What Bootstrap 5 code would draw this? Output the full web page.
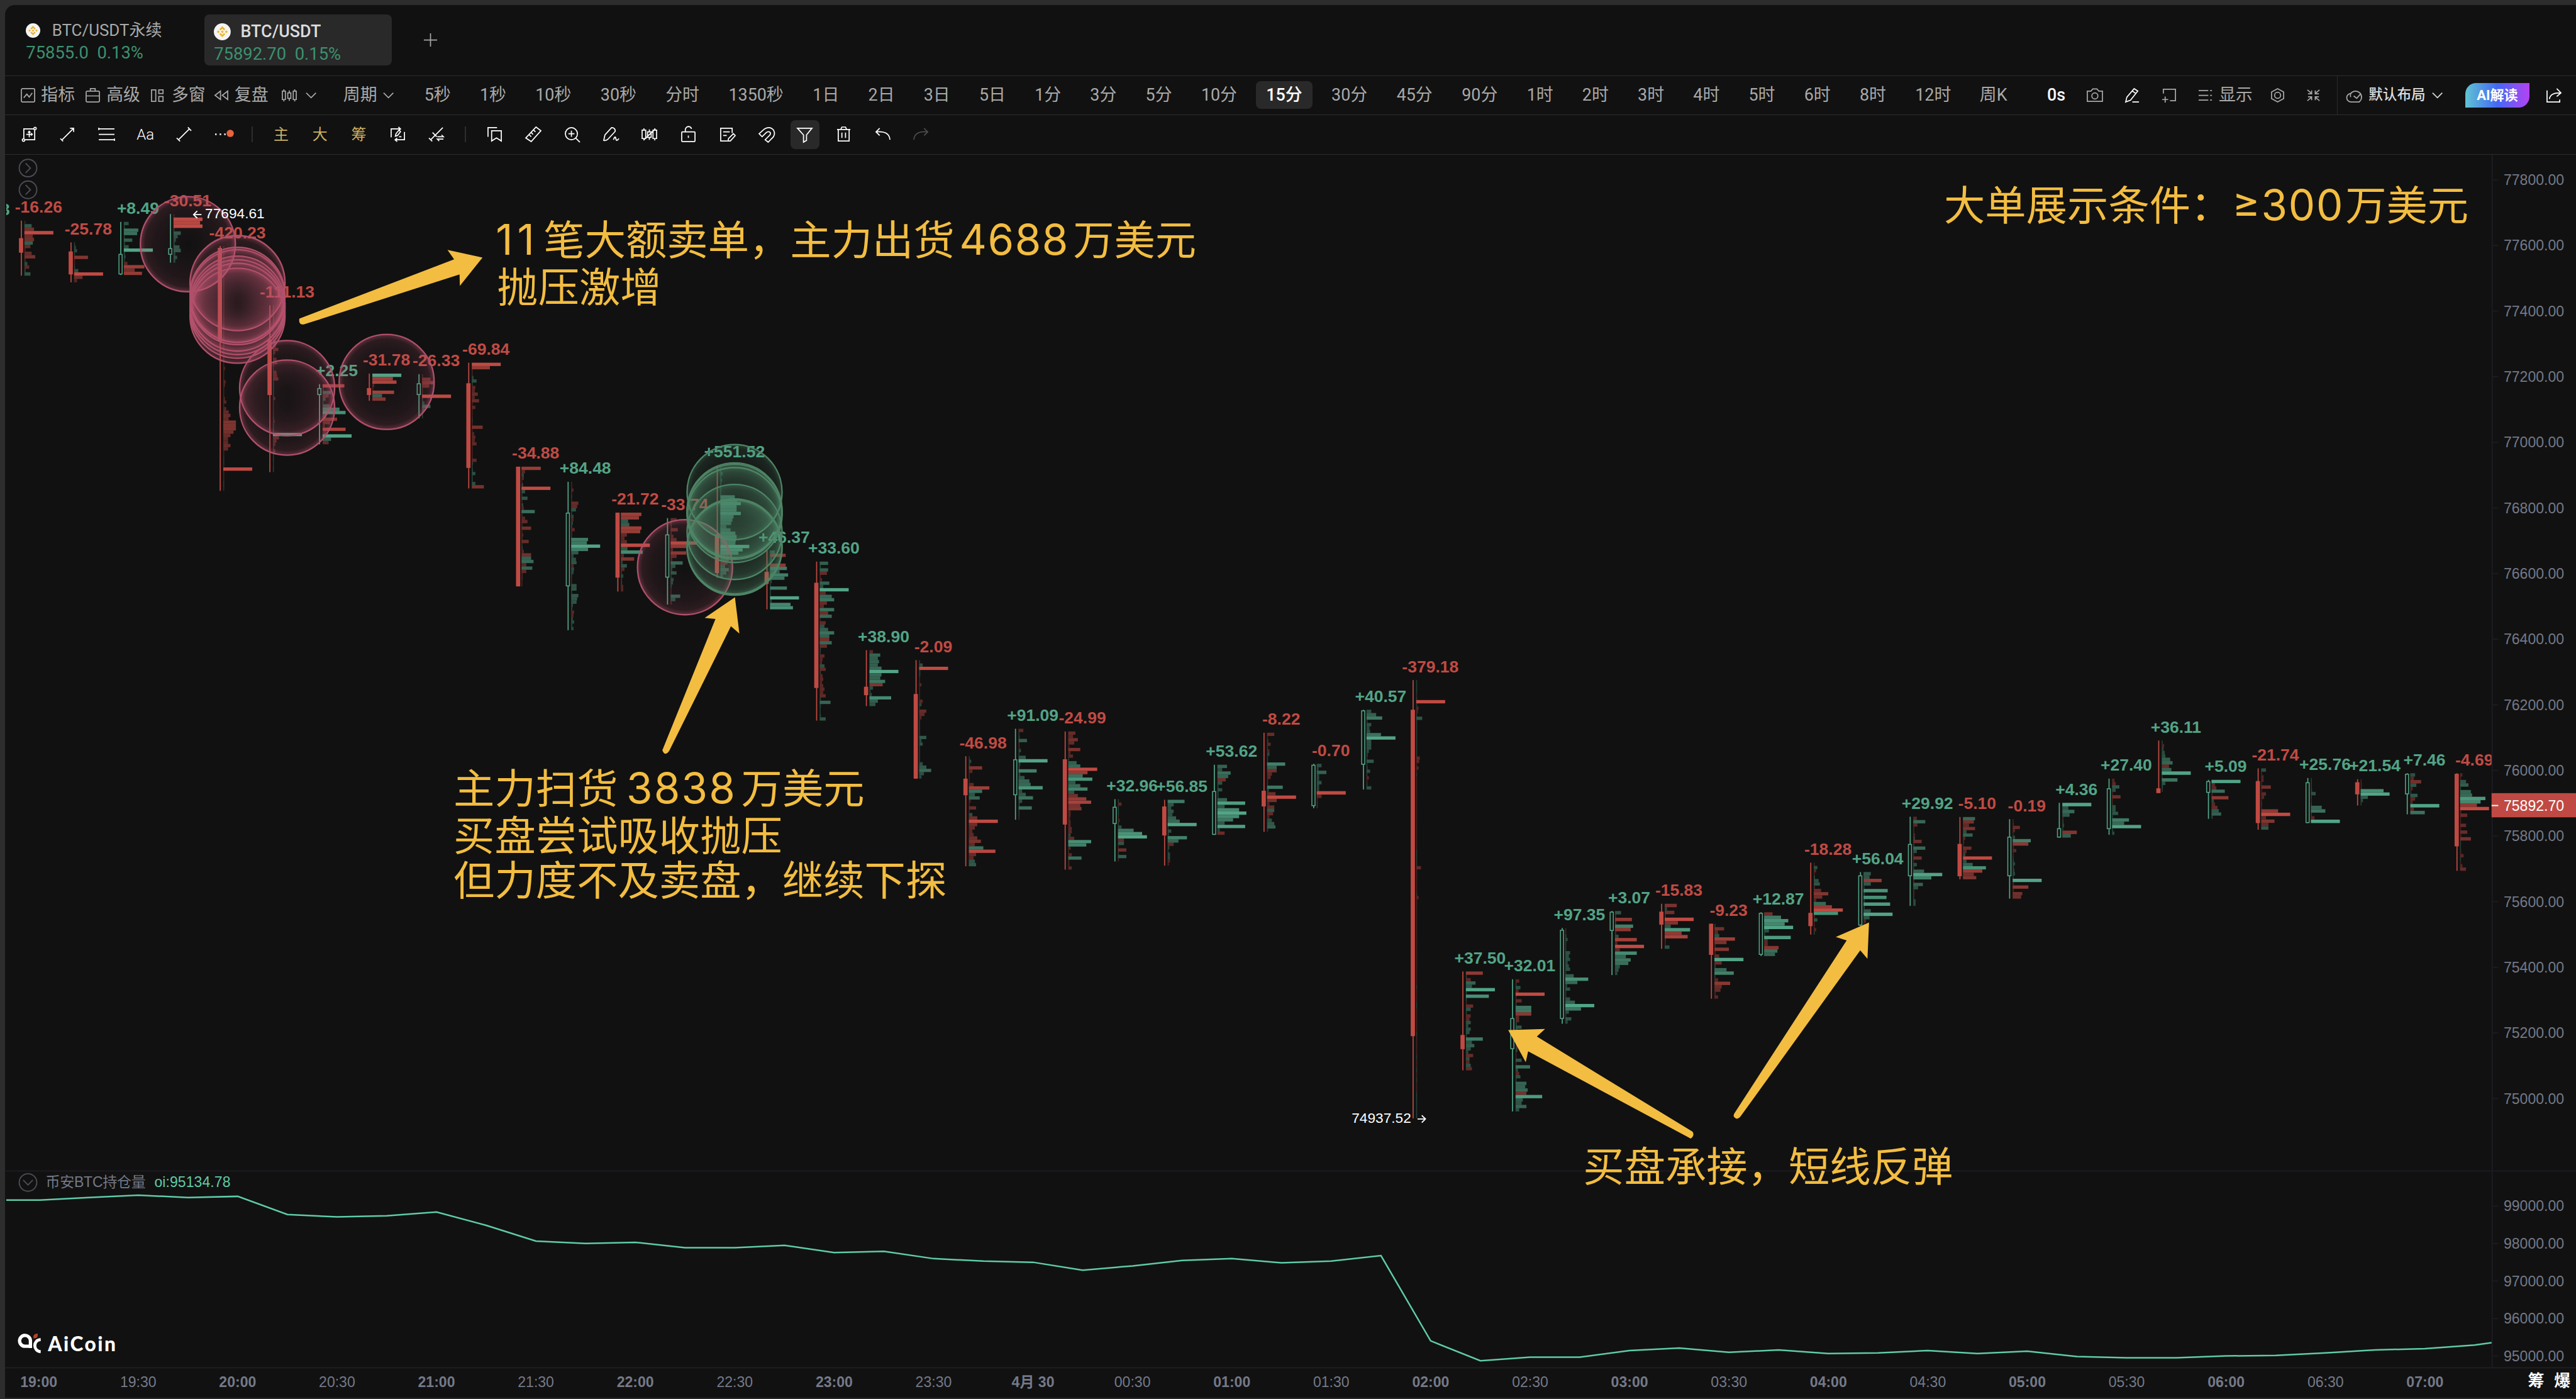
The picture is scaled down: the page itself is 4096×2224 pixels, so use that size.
<!DOCTYPE html>
<html lang="zh-CN" data-bs-theme="dark">
<head>
  <meta charset="UTF-8" />
  <meta name="viewport" content="width=device-width, initial-scale=1.0"/>
  <title>BTC/USDT 15分 - AiCoin</title>
  <link rel="stylesheet" href="https://cdn.jsdelivr.net/npm/bootstrap@5.3.0/dist/css/bootstrap.min.css"/>
  <style>
    /* 1rem = 10 design units, whole page scales with the window */
    html {
      font-size: calc(100vw / 426.2);
    }
    body {
      background: #2d2d2d;
      color: #a9a9a9;
      font-family: Roboto, "Noto Sans CJK SC", sans-serif;
      font-size: 2.8rem;
      line-height: 1;
      overflow: hidden;
    }
    .panel {
      background: #111;
      margin: 0.8rem 0 0 0.8rem;
      border-top-left-radius: 1.6rem;
      overflow: hidden;
      white-space: nowrap;
    }
    .bar {
      border-bottom: 0.2rem solid #2d2d2d;
    }
    .bar-tabs { height: 11.8rem; }
    .bar-period { height: 6.4rem; padding-left: 2.6rem; }
    .bar-draw { height: 6.6rem; padding-left: 0.8rem; }
    .pair {
      height: 8.4rem;
      border-radius: 0.8rem;
    }
    .pair-first {
      width: 31rem;
      padding: 0.9rem 0 0 1.6rem;
      margin: 1.6rem 0 0 1.9rem;
    }
    .pair-on {
      width: 31rem;
      background: #292929;
      padding: 1.1rem 0 0 1.6rem;
      margin: 1.6rem 0 0 0.1rem;
      color: #dcdcdc;
      font-weight: 500;
    }
    .pair-name { height: 3.6rem; font-size: 2.7rem; }
    .pair-on .pair-name { font-size: 2.8rem; }
    .pair-price {
      color: #3d9070;
      font-weight: 400;
      font-size: 2.85rem;
      line-height: 3.8rem;
    }
    .coin { width: 2.4rem; margin-right: 1.9rem; }
    .pair-on .coin { width: 2.8rem; margin-right: 1.6rem; }
    .tab-add { margin-left: 5.2rem; }
    .ico {
      width: 2.4rem;
      height: 2.4rem;
      fill: none;
      stroke: currentColor;
      stroke-width: 1.8;
      flex: none;
      overflow: visible;
    }
    .menu-item { gap: 1rem; flex: none; }
    .period {
      flex: none;
      height: 4.6rem;
      margin-right: 1.38rem;
      border-radius: 0.8rem;
    }
    .period-on {
      background: #292929;
      color: #fff;
      font-weight: 500;
    }
    .layout-box {
      border-left: 0.2rem solid #2d2d2d;
      padding-left: 1.4rem;
      font-size: 2.35rem;
      color: #dcdcdc;
      font-weight: 500;
      flex: none;
    }
    .cloud { width: 3.2rem; height: 2.6rem; color: #a9a9a9; }
    .ai-btn {
      width: 10.6rem;
      height: 4rem;
      margin: 0 2.8rem 0 3.2rem;
      border-radius: 1.8rem 0 1.8rem 0;
      background: linear-gradient(90deg, #5fc4d2, #4468f5 50%, #b443f2);
      color: #fff;
      font-size: 2.3rem;
      font-weight: 700;
      flex: none;
    }
    .slot {
      width: 6.42rem;
      height: 4.8rem;
      color: #fff;
      flex: none;
    }
    .slot-on {
      background: #292929;
      border-radius: 0.8rem;
      width: 4.8rem;
      margin: 0 0.81rem;
    }
    .slot-aa { font-size: 2.5rem; font-weight: 300; }
    .gold { color: #cdb163; font-size: 2.5rem; }
    .rule { width: 0.2rem; height: 2.6rem; margin: 0 1.5rem; background: #2d2d2d; flex: none; }
    .chart { width: 100%; }
    .axis-txt { font: 24px "Liberation Sans", sans-serif; fill: #747988; }
    .delta-txt { font: bold 27.6px "Liberation Sans", sans-serif; }
    .note-txt { font: 68px "Noto Sans CJK SC", sans-serif; fill: #f3bd41; }
    .note-num { font: 70px Inter, sans-serif; }
  </style>
</head>
<body>
  <div class="panel">
    <!-- Tabs -->
    <div class="bar bar-tabs d-flex">
      <div class="pair pair-first">
        <div class="pair-name d-flex align-items-center">
          <svg class="coin" viewBox="0 0 28 28"><use href="#coin"/></svg>BTC/USDT永续
        </div>
        <div class="pair-price">75855.0 &nbsp;0.13%</div>
      </div>
      <div class="pair pair-on">
        <div class="pair-name d-flex align-items-center">
          <svg class="coin" viewBox="0 0 28 28"><use href="#coin"/></svg>BTC/USDT
        </div>
        <div class="pair-price">75892.70 &nbsp;0.15%</div>
      </div>
      <div class="tab-add d-flex align-items-center">
        <svg class="ico" viewBox="0 0 24 24"><path d="M12 1v22M1 12h22"/></svg>
      </div>
    </div>

    <!-- Periods -->
    <div class="bar bar-period d-flex align-items-center">
      <div class="d-flex" id="menus"></div>
      <div class="d-flex" id="periods"></div>
      <div class="d-flex align-items-center" id="actions"></div>
      <div class="layout-box d-flex align-items-center h-100">
        <svg class="ico cloud" viewBox="0 0 32 26"><path d="M8 24a7 7 0 0 1-1-14 10 10 0 1 1 14 14zM12 14l5 4 6-7M7 10q-1 3 0 6"/></svg>
        <span class="ms-2 me-3">默认布局</span>
        <svg class="ico" viewBox="0 0 24 24"><path d="M2 8l8 8 8-8"/></svg>
      </div>
      <div class="ai-btn d-flex align-items-center justify-content-center">AI解读</div>
      <svg class="ico text-white" viewBox="0 0 24 24"><path d="M1 4v19h21v-4M5 18c1-7 6-10 18-10M17 1l7 7-7 6"/></svg>
    </div>

    <!-- Drawing tools -->
    <div class="bar bar-draw d-flex align-items-center" id="draw"></div>

    <svg class="chart d-block" id="chart" viewBox="8 256 4254 2058">
      <defs>
        <symbol id="coin" viewBox="0 0 28 28">
          <circle cx="14" cy="14" r="14" fill="#f4f4f4"/>
          <path fill="#f0b429" d="M14 5l5 5-2 2-3-3-3 3-2-2zM14 23l5-5-2-2-3 3-3-3-2 2zM14 11.700l2.300 2.300-2.300 2.300-2.300-2.300zM7.300 11.700l2.300 2.300-2.300 2.300L5 14zM20.700 11.700L23 14l-2.300 2.300-2.300-2.300z"/>
        </symbol>
        <radialGradient id="sellFill">
          <stop offset="0" stop-color="#b8526d" stop-opacity="0"/>
          <stop offset=".7" stop-color="#b8526d" stop-opacity=".09"/>
          <stop offset=".9" stop-color="#b8526d" stop-opacity=".16"/>
          <stop offset="1" stop-color="#b8526d" stop-opacity=".45"/>
        </radialGradient>
        <radialGradient id="buyFill">
          <stop offset="0" stop-color="#4f8a69" stop-opacity=".03"/>
          <stop offset=".7" stop-color="#4f8a69" stop-opacity=".1"/>
          <stop offset=".9" stop-color="#4f8a69" stop-opacity=".17"/>
          <stop offset="1" stop-color="#4f8a69" stop-opacity=".36"/>
        </radialGradient>
        <clipPath id="plot"><rect x="10" y="256" width="4112" height="1680"/></clipPath>
      </defs>
      <g id="frame"></g>
      <g id="candles" clip-path="url(#plot)"></g>
      <g id="bubbles"></g>
      <g id="oi"></g>
      <g id="extremes" font-family="Liberation Sans, sans-serif" font-size="23.600" fill="#fff">
        <text x="339" y="361.500">77694.61</text>
        <path d="M333 355h-13m6-6l-6 6 6 6" fill="none" stroke="#fff" stroke-width="2"/>
        <text x="2236" y="1857.500">74937.52</text>
        <path d="M2345 1851h13m-6-6l6 6-6 6" fill="none" stroke="#fff" stroke-width="2"/>
      </g>
      <g id="arrows" fill="#f3bd41">
        <path d="M495 527L751 429 740 413.500 798 426 760.500 473 760 454 503 536.500Q493 538 495 527z"/>
        <path d="M1095.500 1241L1183.400 1024 1165.600 1022 1215.600 988 1223 1048 1209 1036 1107 1242Q1100 1252 1095.500 1241z"/>
        <path d="M2495 1704L2556 1702 2542.400 1714.700 2800 1872Q2804 1878 2797 1883.500L2528 1739 2524 1757z"/>
        <path d="M3092 1526L3089.400 1586 3077.500 1572 2880 1846Q2874 1854 2869 1848Q2867 1846 2869 1842L3055 1555.500 3037 1550z"/>
      </g>
      <g class="note-txt">
        <text y="421"><tspan class="note-num" x="820" textLength="64">11</tspan><tspan x="899">笔大额卖单，主力出货</tspan><tspan class="note-num" x="1587" textLength="180">4688</tspan><tspan x="1775">万美元</tspan></text>
        <text x="822" y="500">抛压激增</text>
        <text y="1329"><tspan x="750">主力扫货</tspan><tspan class="note-num" x="1036" textLength="180">3838</tspan><tspan x="1226">万美元</tspan></text>
        <text x="750" y="1407">买盘尝试吸收抛压</text>
        <text x="750" y="1481">但力度不及卖盘，继续下探</text>
        <text x="2619" y="1954">买盘承接，短线反弹</text>
        <text y="364"><tspan x="3216">大单展示条件：</tspan><tspan class="note-num" x="3693" textLength="183">≥300</tspan><tspan x="3880">万美元</tspan></text>
      </g>
      <!-- Logo -->
      <g>
        <path d="M50 2230V2217a9 9 0 1 0-9 10h9" fill="none" stroke="#fff" stroke-width="5.500"/>
        <path d="M67 2216c-13 0-13 19 0 20" fill="none" stroke="#fff" stroke-width="5"/>
        <path d="M55 2214v-4q1-4 7-4v4q-1 4-7 4z" fill="#b8402a"/>
        <text x="79" y="2235" textLength="112" font-family="Lato" font-weight="900" font-size="33" fill="#fff">AiCoin</text>
      </g>
    </svg>
  </div>

  <script>
    // ---------- toolbars ----------
    const icons = {
      indicator: '<rect x="1" y="1" width="22" height="22" rx="2"/><path d="M5 16l5-6 4 5 5-7"/>',
      bag: '<rect x="1" y="5" width="22" height="18" rx="2"/><path d="M8 5V1h8v4M1 13h22"/>',
      windows: '<rect x="1" y="3" width="7" height="19"/><rect x="13" y="3" width="7" height="6"/><rect x="13" y="14" width="7" height="8"/>',
      rewind: '<path d="M11 5L2 12l9 7zM23 5l-9 7 9 7z"/>',
      kline: '<path d="M1 5h5v14H1zM10 8h5v9h-5zM19 5h5v14h-5zM3.500 2v3M3.500 19v3M12.500 4v4M12.500 17v4M21.500 2v3M21.500 19v3"/>',
      down: '<path d="M1 8l8 8 8-8"/>',
      camera: '<path d="M1 5h6l3-3.500h7L20 5h6v17H1z"/><circle cx="13.500" cy="13" r="5"/>',
      pen: '<path d="M1 23l2-8L15 1l6 4L9 20zM12 5l6 4M12 23h11" stroke="#fff"/>',
      addpane: '<path d="M3 9V2h20v19h-9M6 14v10M1 19h10"/>',
      list: '<path d="M1 4h16M1 12h16M1 20h16M20 4h3M20 12h3M20 20h3"/>',
      hex: '<path d="M12 1l10 5.500v11L12 23 2 17.500v-11z"/><circle cx="12" cy="12" r="5"/>',
      shrink: '<path d="M2 3l7 6M22 3l-7 6M2 21l7-6M22 21l-7-6M9 4v5.500H3M15 4v5.500h6M9 20v-5.500H3M15 20v-5.500h6"/>',
      plusbox: '<path d="M21 5v16H5M3 19V3h16M12 7v10M7 12h10M10 9l2-2 2 2M15 10l2 2-2 2"/><circle cx="21.500" cy="2.500" r="2"/><circle cx="2.500" cy="21.500" r="2"/>',
      line: '<path d="M3 21L22 2M16 2h6v6M0 19l4.500 4.500"/>',
      rows: '<path d="M-1 3h26M-1 12h26M-1 21h26M-1 1v4M25 19v4"/>',
      seg: '<path d="M3 21L21 3M0 18l5.500 5.500M18.500.5L24 6"/>',
      dots: '<path d="M-1 12h2.500M6.500 12h2.500M14 12h2.500" stroke-width="2.500"/><circle cx="24" cy="10.500" r="6" fill="#e8643c" stroke="none"/>',
      swap: '<path d="M1 17V3h15M13 0l3.500 3-3.500 3M23 8v13H8M11 18l-3.500 3 3.500 3M8 15l1-4 5-6 2.500 2.500-5 6.500zM14 16h4"/>',
      linecut: '<path d="M3 21L23 1M0 18l5.500 5.500M6 9l7 7M14 16h10l-3-3M24 20H14l3 3"/>',
      bookmark: '<path d="M1 16V1h15M7 6h16v17l-8-5-8 5z"/>',
      ruler: '<path d="M17 0l8 6L9 24l-9-6zM13 5l3 3M9 9l3 3M6 13l3 3"/>',
      zoomin: '<circle cx="11" cy="11" r="10"/><path d="M18 18l7 7M11 6v10M6 11h10"/>',
      brush: '<path d="M0 22l2-9L13 1q6 0 6 6L7 20q-3 3-7 2zM16 21q3-8 4-2t5 0"/>',
      nokline: '<path d="M0 5h6v14H0zM9 8h6v9H9zM18 5h6v14h-6zM3 2v3M3 19v3M12 4v4M12 17v4M21 2v3M21 19v3M3 21L22 3"/>',
      lock: '<rect x="1" y="8" width="22" height="16" rx="1"/><path d="M7 8V4q1-5 6-5 4 1 4 4M12 14v4"/>',
      edit: '<path d="M12 23H1V2h19v8M5 8h11M5 14h6M13 23l1-4 8-8 3 3-8 9z"/>',
      magnet: '<path d="M0 11L9 3q9-5 15 2 4 8-3 14l-6 6-5-4 8-8q2-4-1-5-3-1-5 1l-7 7z"/>',
      funnel: '<path d="M0 2h24l-9 11v9l-5 3V13z"/>',
      trash: '<path d="M1 4h22M3 4v19h18V4M7 4l2-4h6l2 4M9 9v9M15 9v9"/>',
      undo: '<path d="M7 2L1 8l6 6M1 8q22-2 23 13"/>',
      redo: '<path d="M17 2l6 6-6 6M23 8Q1 6 0 21"/>'
    };
    const ico = (name) => `<svg class="ico" viewBox="0 0 24 24">${icons[name]}</svg>`;
    const item = ([w, icon, text]) =>
      `<div class="menu-item d-flex align-items-center" style="width:${w / 10}rem">${icon ? ico(icon) : ""}${text ? `<span>${text}</span>` : ""}</div>`;

    document.getElementById("menus").innerHTML =
      [[108, "indicator", "指标"], [108, "bag", "高级"], [104, "windows", "多窗"], [112, "rewind", "复盘"],
       [40, "kline"], [62, "down"]].map(item).join("") +
      `<div class="menu-item d-flex align-items-center" style="width:11.7rem">周期${ico("down")}</div>`;

    const periods = ["5秒", "1秒", "10秒", "30秒", "分时", "1350秒", "1日", "2日", "3日", "5日", "1分", "3分", "5分", "10分", "15分",
      "30分", "45分", "90分", "1时", "2时", "3时", "4时", "5时", "6时", "8时", "12时", "周K"];
    document.getElementById("periods").innerHTML = periods.map((p) => {
      let w = 34;
      for (const c of p) w += c > "\u2e80" ? 28 : 16;
      return `<div class="period d-flex align-items-center justify-content-center${p === "15分" ? " period-on" : ""}" style="width:${w / 10}rem">${p}</div>`;
    }).join("");

    document.getElementById("actions").innerHTML =
      '<div class="text-light fw-medium" style="width:6.6rem;margin-left:3.6rem">0s</div>' +
      [[63, "camera"], [60, "pen"], [61, "addpane"], [119, "list", "显示"], [60, "hex"], [51, "shrink"]].map(item).join("");

    const tools = ["plusbox", "line", "rows", "#Aa", "seg", "dots", "|", "#主", "#大", "#筹", "swap", "linecut", "|",
      "bookmark", "ruler", "zoomin", "brush", "nokline", "lock", "edit", "magnet", "funnel", "trash", "undo", "redo"];
    document.getElementById("draw").innerHTML = tools.map((t) => {
      if (t === "|") return '<div class="rule"></div>';
      const cls = t === "funnel" ? " slot-on" : t === "redo" ? " opacity-25" : t === "#Aa" ? " slot-aa" : "";
      const gold = t[0] === "#" && t !== "#Aa" ? " gold" : "";
      return `<div class="slot d-flex align-items-center justify-content-center${cls}${gold}">${t[0] === "#" ? t.slice(1) : ico(t)}</div>`;
    }).join("");

    // ---------- chart ----------
    const GREEN = "#52a486", RED = "#c04a43";
    const STEP = 82.24, ROW_MAX = 48;

    // label, candle colour, high, low, body top, body bottom, volume rows from the top
    const candles = [
      ["-16.26", "r", 365, 456, 394, 418, "r1 g12 r16 r48 r14 r16 g14 r10 r2 r12 r18 r2 g5 r8 g2 g10"],
      ["-25.78", "r", 401, 467, 416, 454, "g1 g3 g5 g1 r23 r1x2 g1 g7 r48 r14 r5"],
      ["+8.49", "g", 367, 455, 420, 454, "g8 g1 g24 g22 g1 g14 g2 g8 g48 g2 g3 g1 r6 r34 r18 r30"],
      ["-30.51", "g", 354, 434.5, 410.5, 421.5, "r1 r48 r44 r48 g1 g12 g7 g4 g2 g10 g12 g3 g6 g3"],
      ["-420.23", "r", 407, 812, 410, 564, "r1x36 r3 r1x3 r4 r3 r1x3 r3 r5 r1 r5 r9 r12 r9 r21x3 r17 r12 r8x2 r12 r8 r1x2 g1x2 r1 r48 r1x3 g1x2 r1"],
      ["-111.13", "r", 505, 781, 562, 653.5, "g1x5 r1x6 g5 r5 r9 r4 r1 r6 r7 r1x2 r6 r7 r9 g1x5 r4 r1x5 g1 r3 g1x3 g48 r10 r6 r4 r2 r4 g1x3 r1 g1x2"],
      ["+2.25", "g", 635.5, 735, 642, 653.5, "r36 r2 g14 r10 g5 g1 g12 g28 g38 g6 r24 r12 r4 r38 r6 g48 g14 r10"],
      ["-31.78", "r", 618, 663, 642, 653.5, "g48 r34 r40 r3 r1 r36 g16 r22"],
      ["-26.33", "g", 619, 692, 634, 653.5, "r1 r14 r19 r12 r1x2 r48 g1 g4 g14 g4 g1x2"],
      ["-69.84", "r", 600, 808, 634, 774, "r48 r30 r1x2 g3 g8 g1 r6 r5 r10 r5 r12 r1 r6 r1x3 g1 r1 r18 r1 r4 r6 r5 r8 r1x4 r8 g2 g1 g2 g6 g1x2 g6 r20"],
      ["-34.88", "r", 772, 970, 772, 970, "r32 r6 g4 r4 r1 g3 r48 g6 g1 g10 r1 g3 r4 g22 g1 r6 r10 g1 r16 r1 r3 g1 r12 g1 g2 r4 r16 g16 g20 r8 g18 r8 r2x2 r1x2"],
      ["+84.48", "g", 797, 1042.5, 848, 970, "r1x2 r4 r1 g1 r1 r12 r10 g8 g1 g4 r4 g3 g2 r6 r2 g1 g28 g26 g48 g28 g12 g4 g8 g9 r4 g5 g4 g1 r1x2 g9x2 g1 g12 g10 g9 g3 g2 r5 r4 g3 g5 g2 g4"],
      ["-21.72", "r", 848, 978.5, 848, 955.5, "r34 r30 g12 g14 r34 r32 r10 r6 r10 r48 g11 g36 r5 r22 g3 g10 r6 r2 g4 r2 g2 r4x2"],
      ["-33.74", "g", 857, 1000, 884, 955.5, "r10 r2x2 r12 r2 r5 r10 r44 r26 r4 r26 r10 r3 g20 g8 g3 g10 g1 g5 g4 g2 r1x2 g16 g8 r2"],
      ["+551.52", "r", 770, 956, 884, 948, "g1x2 g4 g1 g3 g1x4 g24 g28 g34 g27x2 g34 g22 g20 g18 g10 g17 g25 g27 g26 g25 g48 g37 g30 r14 g14 r12 g8 g14 g10 g4"],
      ["+46.37", "r", 910.5, 1008, 946, 966, "g8 r26 g3 g1 r26 g28 g16 g30 g24 g3 g1 g28 g1x2 g48 g3 g34 g38"],
      ["+33.60", "r", 929, 1192, 964, 1138, "g14 g2 g14 r12 r2 r4 g16 g6 g48 r10 g20 g24 r12 r7 g24 r14 g20 r1 r10 g8 g14 g24 g16 r16 g20 r12 g2 g1 r8 r5 r4 g8 r10 g2 r5 r6 r4 r6 r8 r6 r10 g2 g18 g2 g1x2 g2 g10"],
      ["+38.90", "r", 1075.5, 1168, 1136, 1150, "r6 g18 g14 g16 g14 g20 g48 g20 g18 g26 r22 g6 g2 g4 g36 g14 g10"],
      ["-2.09", "r", 1092, 1288, 1148, 1288, "g1 g6 r48 g2x2 r1x2 r4 r1x4 r6 g4 r1 r12 r9 r4 g1x5 g12 g4 g6 g1x5 g6 g12 g20 g8 g4"],
      ["-46.98", "r", 1251, 1433, 1288, 1315.5, "g1 g4 g2 r22 r6 r1x3 r8 r34 g22 g10 g18 r3 r1 r12 r1 g6 r14 r48 r14 r10 r6 r8 r14 r20 r10 g24 r44 r12 r8 g10 g12"],
      ["+91.09", "g", 1205.5, 1356, 1256, 1315.5, "r8 g1 g2 g14 r2x2 g4 g1 g12 g48 g3 g2 g30 g3 g10 g18 g20 g40 g6 g12 g24 g6 g2 g22 g1x2 r1"],
      ["-24.99", "r", 1210, 1438.5, 1256, 1364, "r12 r8 r16 r10 r2 r20 r4 r8 g1 g14 g20 r48 r32 g24 g40 g12 g20 g32 g10 r16 r30 r38 r20 r22 r4x2 r3 r4x2 r6x2 g4 r10 g38 g30 r4 r1 r6 g22 r2x2 r6"],
      ["+32.96", "g", 1322, 1425, 1334.5, 1363, "g1 r6 g1x3 r1 r3 g1 g6 g26 g40 g48 r10 g10 r1 r14 g1 g14 r1"],
      ["+56.85", "r", 1323, 1432, 1334, 1382, "g28 g10 g6 g10 g8 g14 g20 g48 g1 g6 g2 g32 g18 r10 g3 g1 g4x2 r4 r2"],
      ["+53.62", "g", 1265, 1381, 1308.5, 1381, "g16 g8 g22 g18 r14 g8 g2 g8 g2x2 g16 g46 g12 g36 g48 g36 g26 g12 g46 g4 r12"],
      ["-8.22", "r", 1212, 1376, 1308, 1334, "r12 r1 g2 r6 g1 r4 g4 g1x2 g30 g16 r16 r8 r6 r2 g1 g26 g3 r14 r48 r16 r4 r12 g12 r10 r4 g8 g12 g14 g1"],
      ["-0.70", "g", 1263.5, 1337, 1265, 1333.5, "g8 g3 g16 g4x2 g8 g4x2 r48 r8 r1 g1x2"],
      ["+40.57", "g", 1174, 1306, 1175, 1265, "g8 g16 g26 g1 g8 g5 g6 g24 g48 g8x3 g4 g2 g1 g12 g1 g2 g6 g1 r4 r1 g1 g8"],
      ["-379.18", "r", 1125, 1850, 1174, 1714, "g1x4 r1 g1 r48 g1 r4 r3 g1 g10 g1x11 r6 r5 r1 r4 r1 g1 r1x22 g1x5 r8 r1x7 g1 r4 r1x26 g1 r1x4 g1x2 r1x7 g1 r1x6 g1 r1x3 g1 r1x2 g1 r1x3 g1x8"],
      ["+37.50", "r", 1607, 1770.5, 1712, 1735.5, "r28 g1 r8 g16 g10 g48 g1 g38 g1 r1 r12 g8 g1 r8 r6 g8 g4 g8 g6 g1 g28 g10 g14 g8 g4 r12 g6 r6 g8 r10"],
      ["+32.01", "g", 1620, 1838.5, 1684, 1735.5, "r6 g1 g8 r5 r48 r1 r10 g1 g26x2 r26 r6x2 g2 g10 g3 r2 r4 r6 r8 r4 g3 r1x2 g10 r1 g24 g4 r6 g8 g1 g18 g16 g20 r18 g44 g12 g10 g18 g6"],
      ["+97.35", "g", 1535, 1693.5, 1538, 1685.5, "r1x2 g2 g4 g1x3 g8 g6 g8 g4 g6 g8 g1 g14 g38 g20 g3 g8 g1x2 g8 g16 g48 g26 g6 g1 g10 g4"],
      ["+3.07", "g", 1507, 1613, 1508, 1540, "g10 r2 r28 g2 g30 r26 r2 g6 r36 r4 r48 r8 g36 g18 g26 g22 g8 g6 g4"],
      ["-15.83", "r", 1495, 1569.5, 1508, 1529.5, "r20 g4 r16 r2 r48 r22 g10 g42 r28 r38 r2 r1 g8"],
      ["-9.23", "r", 1528, 1652, 1528, 1579.5, "g1 r16 r6 g8 r34 r20 r2 r24 r2 r8 g48 r12 g2 g20 g32 g1 r6 r26 r12 r10 r2 r6"],
      ["+12.87", "g", 1509, 1581.5, 1510, 1579.5, "r14 g28 g40 g34 g48 g8 g1 g44 r6x2 r24 g22 g18"],
      ["-18.28", "r", 1427, 1546, 1510, 1532, "r1 g6 r4 r1 g2 g8 g10 r2 r12 r24 r14 r4 g20 r30 r48 g40 r2 g6 r1x2 r4 g1"],
      ["+56.04", "g", 1442.5, 1532, 1448, 1531, "g12 g10 r30 g12 g1 g40 g2 g38 g2 g44 g2 g12 g48 g10 r4 r1"],
      ["+29.92", "g", 1351, 1498.5, 1396, 1449.5, "r6 g20 r7 r1x2 r3 g3 r14 g1 g20 g6 r1 r14 r1 g6 g1 g18 g48 g30 r2 g16 g8 r2x2 g1 g4x2"],
      ["-5.10", "r", 1351.5, 1454.5, 1396, 1449.5, "g20 r18 r10 r20 g6 g16 r4 r2 r1 r14 r6 g4 r48 g6 g16 g38 r32 r18 r22"],
      ["-0.19", "g", 1355, 1486.5, 1384, 1449.5, "r1 r2 r12 r4 r1 g4 g30 r26 r2 r6 r1 g1 g2 g4 g2 g3 g4 g1 g48 r2 r26 r2 r16 r14"],
      ["+4.36", "g", 1328, 1385.5, 1370, 1385.5, "g48 g10 g20 g12 r2 g2 g3 g1 r24 g14"],
      ["+27.40", "g", 1288, 1381, 1304, 1371.5, "r4 r6 g12 g6 r1 r14 r1x2 g6x2 g10 g1 g28 g20 g48 g1 g4"],
      ["+36.11", "r", 1225, 1310, 1304, 1312, "g1 r4 g3 g5 g6 g14 g18 r12 g16 g48 r1 g26 g6 g2 g1"],
      ["+5.09", "g", 1290, 1354.5, 1292, 1311.5, "g48 r6 r8 g22 r2 r28 g4 r6 r10 g12 g16 g2"],
      ["-21.74", "r", 1271, 1372.5, 1292, 1361.5, "g8 r1 r4x2 r1 r16 r1 r8 r5 r1 g1 r1 r28 r48 r8 r22 r12 g12"],
      ["+25.76", "g", 1287, 1361.5, 1294, 1361.5, "g1x3 g2 g8 g1 r1 g1 g18 g24 g1 r6 g48"],
      ["+21.54", "r", 1289, 1332.5, 1294, 1314, "r1 r2x2 g38 g48 g12 g4 g1"],
      ["+7.46", "g", 1279, 1347, 1280, 1314, "g8 r6 r18 g10 r4 g1 g12 r8 r4 g48 r6 g24"],
      ["-4.69", "r", 1279, 1440.5, 1280, 1400, "r4 r1 g10 g14 g1 g18 g20 g42 g34 r28 r48 r2 r12 r1x2 r10 r1 r12 r2 r18 g1x3 r2 r6 g1 r1 r4 r10"]
    ];

    const rect = (x, y, w, h, attrs) => `<rect x="${x.toFixed(1)}" y="${y.toFixed(1)}" width="${w}" height="${h.toFixed(1)}" ${attrs}/>`;
    const text = (x, y, s, attrs) => `<text x="${x}" y="${y}" ${attrs}>${s}</text>`;

    let out = text(16, 356, "3", `class="delta-txt" text-anchor="end" fill="${GREEN}"`);
    candles.forEach(([label, dir, high, low, top, bottom, profile], i) => {
      const x = 35 + STEP * i;
      const rows = [];
      profile.split(" ").forEach((t) => {
        const [w, n] = t.slice(1).split("x");
        for (let k = 0; k < (n || 1); k++) rows.push([t[0], +w]);
      });
      const h = (low - high) / rows.length;
      rows.forEach(([c, w], k) => {
        const alpha = 0.32 + 0.68 * Math.min(1, w / ROW_MAX);
        out += rect(x + 5, high + k * h, Math.max(w, 1.6), h, `fill="${c === "g" ? GREEN : RED}" opacity="${alpha.toFixed(2)}"`);
      });
      const color = dir === "g" ? GREEN : RED;
      out += rect(x - 0.9, high, 1.8, low - high, `fill="${color}"`);
      out += dir === "g"
        ? rect(x - 3, top + 0.8, 5.2, bottom - top - 1.6, `fill="#111" stroke="${color}" stroke-width="1.6"`)
        : rect(x - 4, top, 7, bottom - top, `fill="${color}"`);
      out += text((x + 28.5).toFixed(1), high - 13, label, `class="delta-txt" text-anchor="middle" fill="${label[0] === "+" ? GREEN : RED}"`);
    });
    document.getElementById("candles").innerHTML = out;

    // large order bubbles: centre x, centre y, side
    const bubbles = [[310.5, 404, "s"], [392.6, 468.3, "s"], [392.6, 487.8, "s"], [392.6, 491.6, "s"], [392.6, 502.3, "s"],
      [392.6, 508.2, "s"], [392.6, 514.1, "s"], [392.6, 522.3, "s"], [474.7, 642, "s"], [474.7, 674.3, "s"], [639.4, 631.8, "s"],
      [1133, 938.3, "s"], [1215, 814, "b"], [1215, 844.3, "b"], [1215, 846.6, "b"], [1215, 852, "b"], [1215, 880, "b"],
      [1215, 904, "b"], [1215, 906, "b"]];
    document.getElementById("bubbles").innerHTML = bubbles.map(([x, y, s]) =>
      `<circle cx="${x}" cy="${y}" r="78.600" fill="url(#${s === "s" ? "sellFill" : "buyFill"})" stroke="${s === "s" ? "#b0506b" : "#4d8465"}" stroke-width="2.400"/>`).join("");

    // open interest
    const oi = [1977, 1981, 1979, 2009, 2013, 2011, 2005, 2027, 2053, 2057, 2055, 2064, 2064, 2060, 2072, 2070, 2082, 2086, 2088,
      2101, 2094, 2085, 2082, 2089, 2086, 2077, 2218, 2251, 2245, 2245, 2234, 2230, 2237, 2233, 2239, 2238, 2234, 2239, 2235,
      2244, 2246, 2246, 2243, 2242, 2238, 2233, 2231, 2225];
    const pts = ["10,1985", "66,1985", "146,1981"].concat(oi.map((y, i) => `${(64 + 82.24 * (i + 2)).toFixed(1)},${y}`), "4122,2221");
    document.getElementById("oi").innerHTML = `<polyline points="${pts.join(" ")}" fill="none" stroke="#5fcba9" stroke-width="2.600"/>`;

    // axes and panel captions
    let f = "";
    const axis = "#1c1c22";
    f += `<path d="M8 1937H4262M8 2262.500H4262M4123 256V2262" stroke="${axis}" stroke-width="2.200" fill="none"/>`;
    for (let i = 0; i < 15; i++) {
      const y = 297.5 + i * 108.55;
      f += `<path d="M4123 ${y}h10" stroke="${axis}" stroke-width="2"/>` + text(4142, y + 8.5, (77800 - i * 200) + ".00", 'class="axis-txt"');
    }
    for (let i = 0; i < 5; i++) {
      const y = 1995 + i * 62;
      f += `<path d="M4123 ${y}h10" stroke="${axis}" stroke-width="2"/>` + text(4142, y + 8.5, (99000 - i * 1000) + ".00", 'class="axis-txt"');
    }
    f += '<rect x="4122" y="1312" width="140" height="40" fill="#c04a43"/><path d="M4122 1332.500h11" stroke="#fff" stroke-width="2"/>';
    f += text(4142, 1341, "75892.70", 'class="axis-txt" style="fill:#fff"');
    for (let i = 0; i < 25; i++) {
      const m = 19 * 60 + i * 30, hh = String(Math.floor(m / 60) % 24).padStart(2, "0"), mm = m % 60 ? "30" : "00";
      const s = i === 10 ? "4月 30" : `${hh}:${mm}`;
      f += text((63.8 + i * 164.5).toFixed(1), 2294, s, `class="axis-txt" text-anchor="middle" style="font-family:'Liberation Sans','Noto Sans CJK SC',sans-serif;font-weight:${i % 2 ? 400 : 700}"`);
    }
    f += text(4182, 2293, "筹", 'font-family="Noto Sans CJK SC" font-weight="700" font-size="27" fill="#fff"');
    f += text(4225.5, 2293, "爆", 'font-family="Noto Sans CJK SC" font-weight="700" font-size="27" fill="#fff"');
    f += '<g fill="none" stroke="#4c4c55" stroke-width="2"><circle cx="46" cy="278" r="14.500"/><path d="M42 270l8 8-8 8"/><circle cx="46" cy="314" r="14.500"/><path d="M42 306l8 8-8 8"/><circle cx="46" cy="1956" r="14.500"/><path d="M38 1952l8 8 8-8"/></g>';
    f += text(75, 1964, "币安BTC持仓量", 'textLength="166" font-family="Liberation Sans, Noto Sans CJK SC" font-size="24" fill="#747988"');
    f += text(255, 1963.5, "oi:95134.78", 'textLength="126" font-family="Liberation Sans" font-size="24" fill="#5fcba9"');
    f += '<rect x="8" y="2312" width="4254" height="2" fill="#2d2a2b"/>';
    document.getElementById("frame").innerHTML = f;
  </script>

  <script src="https://cdn.jsdelivr.net/npm/bootstrap@5.3.0/dist/js/bootstrap.bundle.min.js"></script>
</body>
</html>
